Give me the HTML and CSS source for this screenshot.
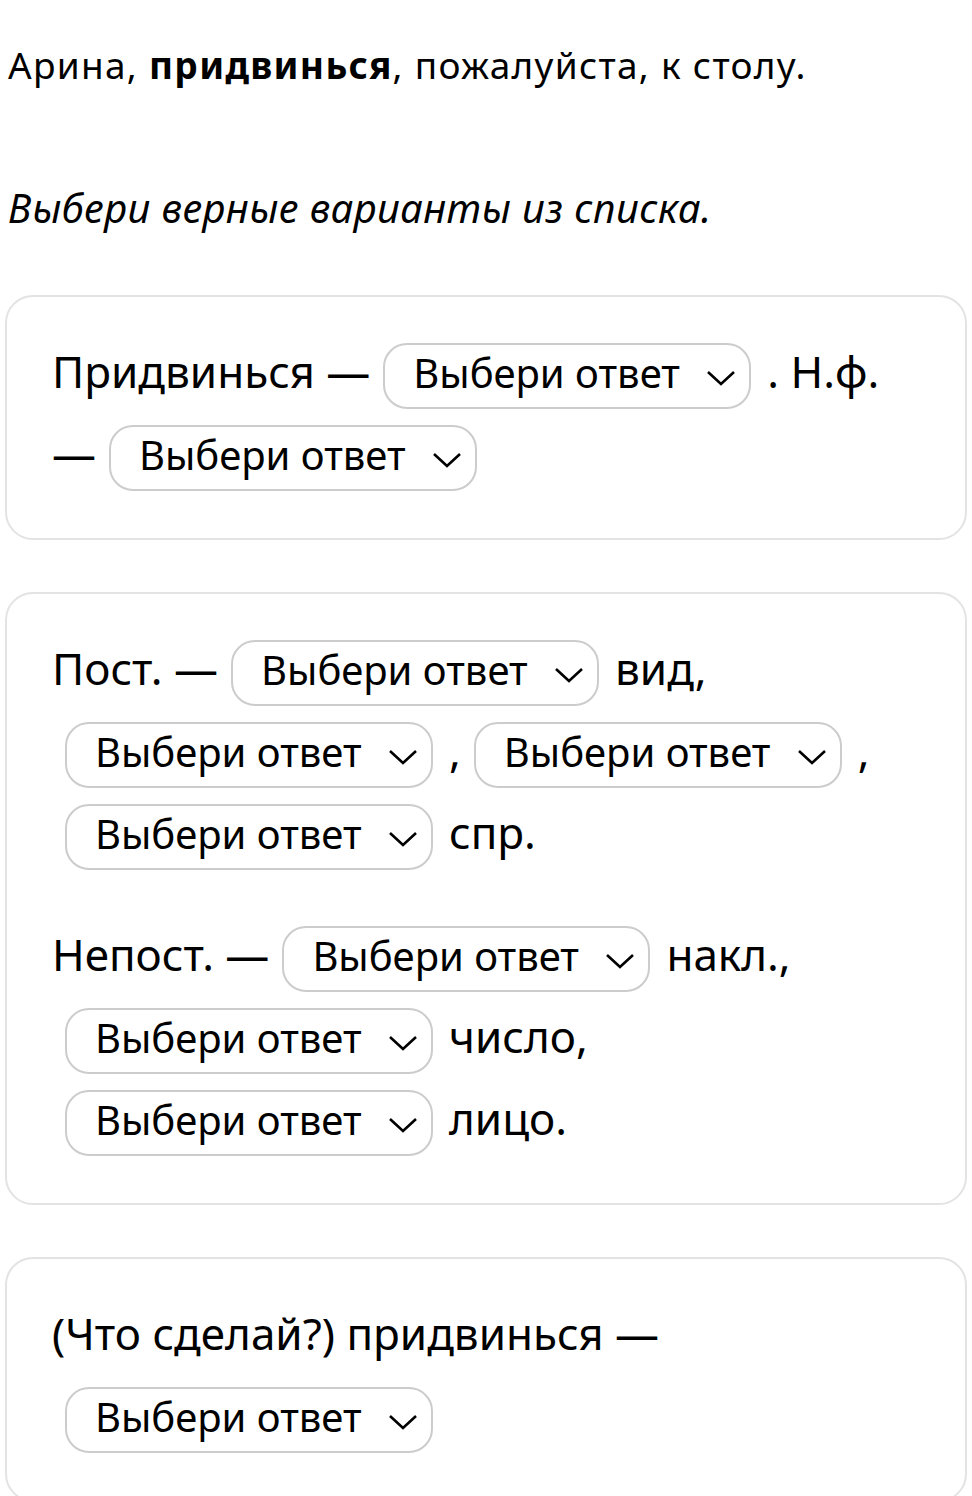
FILE: index.html
```html
<!DOCTYPE html>
<html lang="ru">
<head>
<meta charset="utf-8">
<title>Задание</title>
<link rel="stylesheet" href="styles.css">
</head>
<body>
<main class="page">
  <p class="lead">Арина, <b>придвинься</b>, пожалуйста, к столу.</p>
  <p class="hint">Выбери верные варианты из списка.</p>

  <section class="card">
    <p class="line">Придвинься —<span class="select"><span class="select-text">Выбери ответ</span><svg class="chev" viewBox="0 0 30 16"><path d="M2 2 L15 14 L28 2"/></svg></span>. Н.ф. —<span class="select"><span class="select-text">Выбери ответ</span><svg class="chev" viewBox="0 0 30 16"><path d="M2 2 L15 14 L28 2"/></svg></span></p>
  </section>

  <section class="card">
    <p class="line">Пост. —<span class="select"><span class="select-text">Выбери ответ</span><svg class="chev" viewBox="0 0 30 16"><path d="M2 2 L15 14 L28 2"/></svg></span>вид, <span class="select"><span class="select-text">Выбери ответ</span><svg class="chev" viewBox="0 0 30 16"><path d="M2 2 L15 14 L28 2"/></svg></span>,<span class="select"><span class="select-text">Выбери ответ</span><svg class="chev" viewBox="0 0 30 16"><path d="M2 2 L15 14 L28 2"/></svg></span>, <span class="select"><span class="select-text">Выбери ответ</span><svg class="chev" viewBox="0 0 30 16"><path d="M2 2 L15 14 L28 2"/></svg></span>спр.</p>
    <p class="line">Непост. —<span class="select"><span class="select-text">Выбери ответ</span><svg class="chev" viewBox="0 0 30 16"><path d="M2 2 L15 14 L28 2"/></svg></span>накл., <span class="select"><span class="select-text">Выбери ответ</span><svg class="chev" viewBox="0 0 30 16"><path d="M2 2 L15 14 L28 2"/></svg></span>число, <span class="select"><span class="select-text">Выбери ответ</span><svg class="chev" viewBox="0 0 30 16"><path d="M2 2 L15 14 L28 2"/></svg></span>лицо.</p>
  </section>

  <section class="card">
    <p class="line">(Что сделай?) придвинься —<span class="select"><span class="select-text">Выбери ответ</span><svg class="chev" viewBox="0 0 30 16"><path d="M2 2 L15 14 L28 2"/></svg></span></p>
  </section>
</main>
</body>
</html>
```

FILE: styles.css
```css
html, body {
  margin: 0;
  padding: 0;
  background: #ffffff;
}

body {
  font-family: "Noto Sans", "DejaVu Sans", sans-serif;
  color: #000000;
}

.page {
  padding: 40px 5px 0;
  display: flex;
  flex-direction: column;
}

.lead {
  margin: 0 0 0 3px;
  font-size: 37px;
  line-height: 50px;
  letter-spacing: 1.3px;
}

.lead b {
  font-weight: 700;
}

.hint {
  margin: 93px 0 0 3px;
  font-size: 40px;
  line-height: 50px;
  font-style: italic;
  letter-spacing: 0.4px;
}

.card {
  margin-top: 62px;
  border: 2px solid #e3e3e3;
  border-radius: 28px;
  padding: 33px 44px 44px 45px;
}

.card + .card {
  margin-top: 52px;
}

.line {
  margin: 0;
  font-size: 44px;
  line-height: 82px;
}

.line + .line {
  margin-top: 40px;
}

.select {
  display: inline-flex;
  align-items: center;
  box-sizing: border-box;
  width: 368px;
  height: 66px;
  margin: 0 16px 0 13px;
  padding: 0 13px 0 28px;
  border: 2px solid #cccccc;
  border-radius: 24px;
  vertical-align: middle;
  font-size: 40px;
  line-height: 1;
}

.select-text {
  flex: 1;
  white-space: nowrap;
  margin-bottom: 7px;
}

.chev {
  width: 30px;
  height: 16px;
  margin-top: 4px;
  fill: none;
  stroke: #000000;
  stroke-width: 2.6;
}
```
